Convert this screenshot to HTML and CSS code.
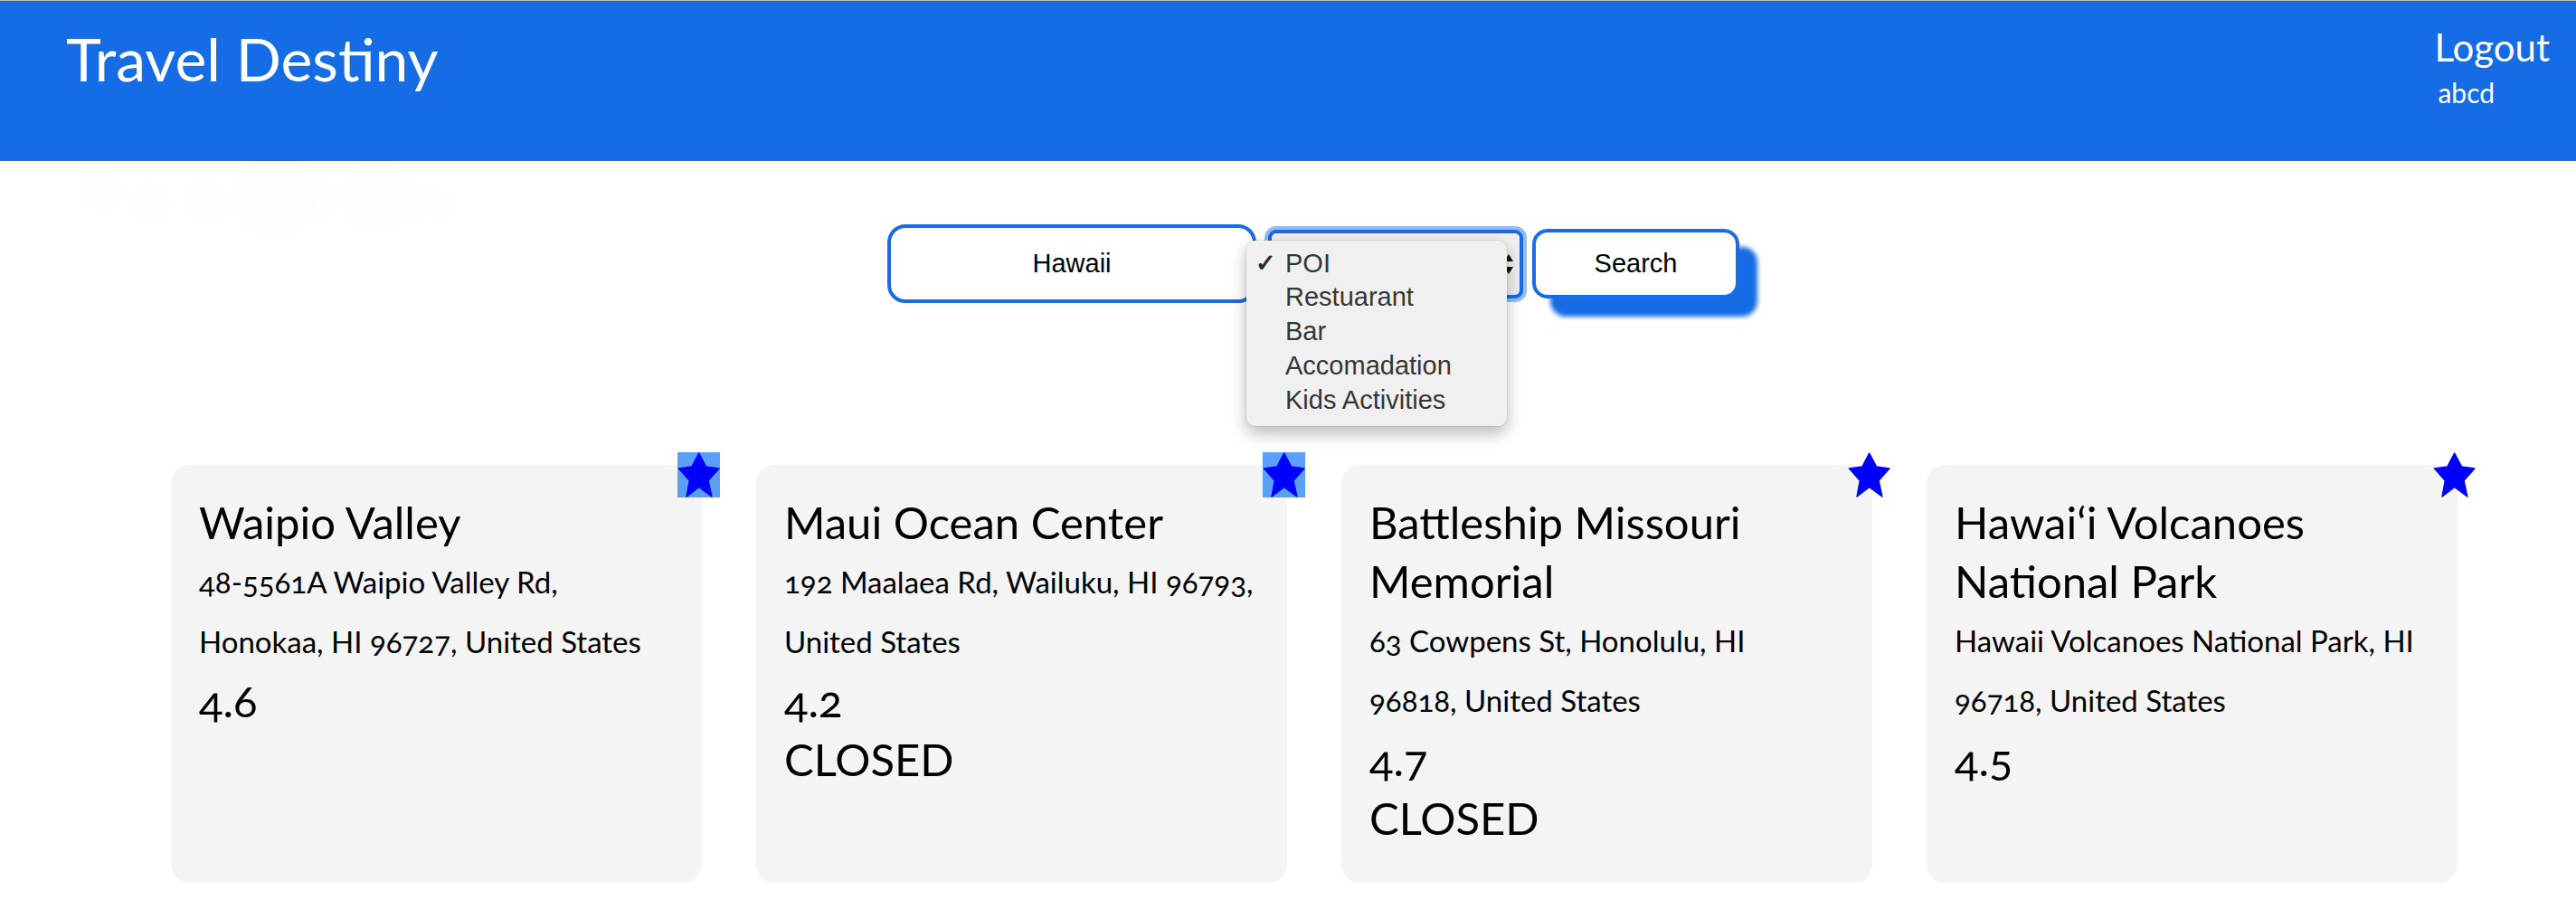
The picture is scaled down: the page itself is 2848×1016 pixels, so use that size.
FILE: index.html
```html
<!DOCTYPE html>
<html lang="en">
<head>
<meta charset="utf-8">
<title>Travel Destiny</title>
<link rel="stylesheet" href="styles.css">
</head>
<body>
<header class="topbar">
  <h1 class="brand">Travel Destiny</h1>
  <div class="account">
    <a class="logout" href="#">Logout</a>
    <span class="user">abcd</span>
  </div>
</header>

<main>
  <form class="search">
    <input class="query" type="text" value="Hawaii">
    <div class="picker">
      <svg class="picker-arrows" viewBox="0 0 12 24" width="12" height="24" aria-hidden="true">
        <path d="M6 1 L11 9 H1 Z M6 23 L11 15 H1 Z" fill="#111"/>
      </svg>
      <ul class="menu">
        <li class="opt checked"><span class="tick">✓</span>POI</li>
        <li class="opt">Restuarant</li>
        <li class="opt">Bar</li>
        <li class="opt">Accomadation</li>
        <li class="opt">Kids Activities</li>
      </ul>
    </div>
    <button class="go" type="button">Search</button>
  </form>

  <section class="results">
    <article class="card">
      <button class="fav on" type="button" aria-label="favourite">
        <svg viewBox="0 0 48 52" width="47" height="50"><polygon class="star" points="24.2,1 32.4,16.6 47.4,18.6 35,32.6 39,51 24.2,40 10,51 13.4,32.6 1,18.6 16,16.6"/></svg>
      </button>
      <h2 class="place">Waipio Valley</h2>
      <p class="addr">48-5561A Waipio Valley Rd,<br>Honokaa, HI 96727, United States</p>
      <div class="rating">4.6</div>
    </article>

    <article class="card">
      <button class="fav on" type="button" aria-label="favourite">
        <svg viewBox="0 0 48 52" width="47" height="50"><polygon class="star" points="24.2,1 32.4,16.6 47.4,18.6 35,32.6 39,51 24.2,40 10,51 13.4,32.6 1,18.6 16,16.6"/></svg>
      </button>
      <h2 class="place">Maui Ocean Center</h2>
      <p class="addr">192 Maalaea Rd, Wailuku, HI 96793,<br>United States</p>
      <div class="rating">4.2</div>
      <div class="status">CLOSED</div>
    </article>

    <article class="card">
      <button class="fav" type="button" aria-label="favourite">
        <svg viewBox="0 0 48 52" width="47" height="50"><polygon class="star" points="24.2,1 32.4,16.6 47.4,18.6 35,32.6 39,51 24.2,40 10,51 13.4,32.6 1,18.6 16,16.6"/></svg>
      </button>
      <h2 class="place">Battleship Missouri Memorial</h2>
      <p class="addr">63 Cowpens St, Honolulu, HI<br>96818, United States</p>
      <div class="rating">4.7</div>
      <div class="status">CLOSED</div>
    </article>

    <article class="card">
      <button class="fav" type="button" aria-label="favourite">
        <svg viewBox="0 0 48 52" width="47" height="50"><polygon class="star" points="24.2,1 32.4,16.6 47.4,18.6 35,32.6 39,51 24.2,40 10,51 13.4,32.6 1,18.6 16,16.6"/></svg>
      </button>
      <h2 class="place">Hawai‘i Volcanoes National Park</h2>
      <p class="addr">Hawaii Volcanoes National Park, HI<br>96718, United States</p>
      <div class="rating">4.5</div>
    </article>
  </section>
</main>
</body>
</html>
```

FILE: styles.css
```css
* {
  box-sizing: border-box;
}

html,
body {
  margin: 0;
  padding: 0;
}

body {
  background: #ffffff;
  color: #000000;
  font-family: Lato, "Noto Sans", sans-serif;
  border-top: 1px solid #bdbdbd;
}

/* ---------- header ---------- */
.topbar {
  height: 177px;
  background: #166ce4;
  color: #ffffff;
  display: flex;
  justify-content: space-between;
  align-items: flex-start;
  padding: 0 29px 0 73px;
}

.brand {
  margin: 24px 0 0;
  font-size: 66px;
  line-height: 80px;
  font-weight: 400;
  text-shadow: 20px 150px 75px rgba(0, 0, 0, 0.09);
}

.account {
  display: flex;
  flex-direction: column;
  align-items: flex-start;
  padding-top: 26px;
}

.logout {
  color: #ffffff;
  text-decoration: none;
  font-size: 42px;
  line-height: 50px;
}

.user {
  font-size: 30px;
  line-height: 32px;
  margin-top: 9px;
  padding-left: 4px;
}

/* ---------- search form ---------- */
.search {
  display: flex;
  align-items: center;
  justify-content: center;
  padding-left: 56px;
  margin: 70px 0 0;
}

.query {
  width: 408px;
  height: 87px;
  margin: 0;
  padding: 0;
  border: 4px solid #1a6be6;
  border-radius: 20px;
  background: #ffffff;
  color: #000000;
  font: 29px "Liberation Sans", Arial, sans-serif;
  text-align: center;
  outline: none;
}

.picker {
  position: relative;
  margin-left: 13px;
  width: 282px;
  height: 76px;
  border: 4px solid #1b6ae4;
  border-radius: 9px;
  background: #efefef;
  box-shadow: 0 0 0 4px #93bbf3;
  display: flex;
  align-items: center;
  justify-content: flex-end;
  padding-right: 6px;
}

.picker-arrows {
  display: block;
}

.menu {
  position: absolute;
  left: -28px;
  top: 8px;
  width: 288px;
  margin: 0;
  padding: 7px 0 10px;
  list-style: none;
  background: #f0f0f0;
  border-radius: 9px;
  box-shadow: 0 0 0 1px rgba(0, 0, 0, 0.07), 0 8px 18px rgba(0, 0, 0, 0.28);
  font: 29px/37.75px "Liberation Sans", Arial, sans-serif;
  color: #363636;
  z-index: 2;
}

.opt {
  position: relative;
  padding-left: 43px;
  white-space: nowrap;
}

.tick {
  position: absolute;
  left: 10px;
  top: 0;
  font-size: 27px;
  font-weight: 700;
  color: #2a2a2a;
}

.go {
  margin-left: 10px;
  width: 229px;
  height: 77px;
  padding: 0;
  border: 4px solid #1a6be6;
  border-radius: 17px;
  background: #ffffff;
  color: #000000;
  font: 29px "Liberation Sans", Arial, sans-serif;
  box-shadow: 20px 20px 5px #166ce4;
}

/* ---------- results ---------- */
.results {
  display: flex;
  gap: 60px;
  padding-left: 189px;
  margin-top: 179px;
}

.card {
  position: relative;
  flex: 0 0 587px;
  height: 462px;
  background: #f4f4f4;
  border-radius: 20px;
  padding: 31px 20px 0 31px;
  font-variant-numeric: oldstyle-nums;
}

.fav {
  position: absolute;
  top: -14px;
  right: -20px;
  width: 47px;
  height: 50px;
  padding: 0;
  border: 0;
  background: transparent;
}

.fav.on {
  background: #5aa0f6;
}

.fav svg {
  display: block;
}

.star {
  fill: #0000ff;
  stroke: #0000ff;
  stroke-width: 1.5;
  stroke-linejoin: round;
}

.place {
  margin: 0;
  font-size: 49px;
  line-height: 65px;
  font-weight: 400;
}

.addr {
  margin: 0;
  font-size: 33px;
  line-height: 66px;
  white-space: nowrap;
}

.rating,
.status {
  font-size: 49px;
  line-height: 65px;
}
```
